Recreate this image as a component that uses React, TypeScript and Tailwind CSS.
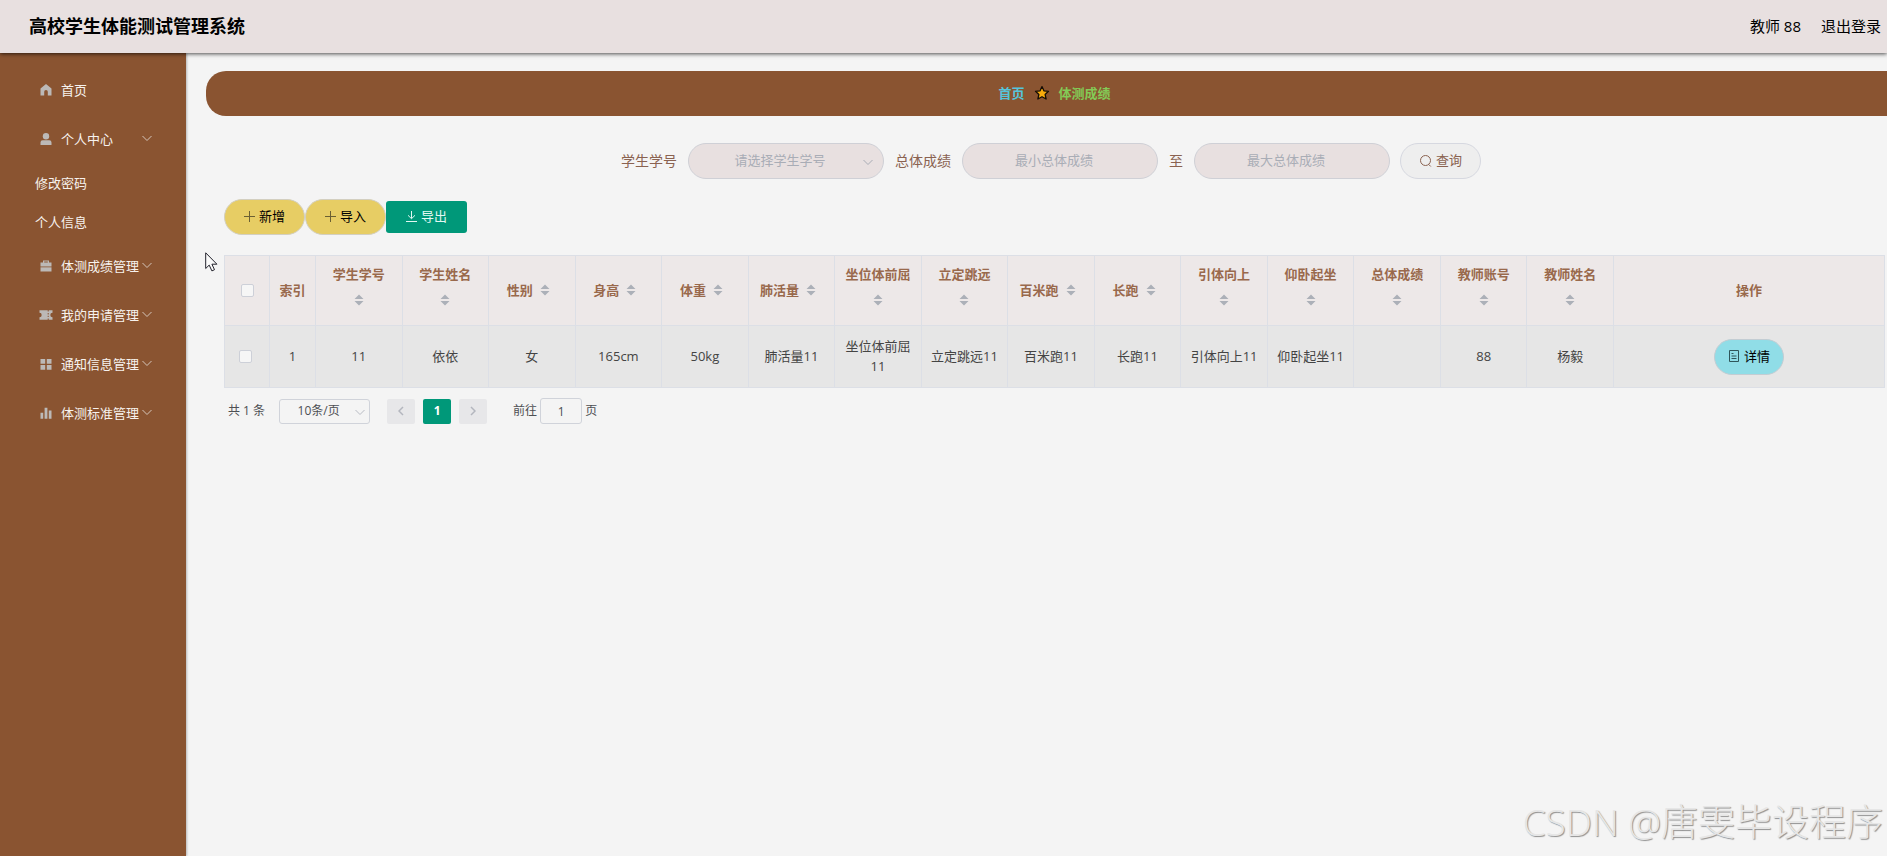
import type { ReactNode } from 'react';

type MenuEntry = {
  label: string;
  icon: ReactNode;
  expandable?: boolean;
  children?: string[];
};

function MenuIcon({ children }: { children: ReactNode }) {
  return (
    <svg viewBox="0 0 14 14" className="h-3.5 w-3.5 shrink-0 fill-[#bcb9b7]" aria-hidden="true">
      {children}
    </svg>
  );
}

function ChevronDown({ className }: { className: string }) {
  return (
    <svg viewBox="0 0 12 7" className={`h-[7px] w-3 ${className}`} fill="none" stroke="currentColor" aria-hidden="true">
      <path d="M1.500 1L6 5.500 10.500 1" />
    </svg>
  );
}

const menu: MenuEntry[] = [
  {
    label: '首页',
    icon: (
      <MenuIcon>
        <path d="M7 1L1.500 5.600V12.600h3.700V8.800a1.800 1.800 0 013.600 0v3.800h3.700V5.600z" />
      </MenuIcon>
    ),
  },
  {
    label: '个人中心',
    expandable: true,
    children: ['修改密码', '个人信息'],
    icon: (
      <MenuIcon>
        <circle cx="7" cy="4.200" r="3.200" />
        <path d="M1.500 13v-2.600a2.200 2.200 0 012.200-2.200h6.600a2.200 2.200 0 012.200 2.200V13z" />
      </MenuIcon>
    ),
  },
  {
    label: '体测成绩管理',
    expandable: true,
    icon: (
      <MenuIcon>
        <path d="M4 3.500V1.500h6v2h2.500v4h-11v-4zM5.200 3.500h3.600v-.9H5.200z" fillRule="evenodd" />
        <path d="M1.500 8.300h11v4.200h-11z" />
      </MenuIcon>
    ),
  },
  {
    label: '我的申请管理',
    expandable: true,
    icon: (
      <MenuIcon>
        <path
          d="M.5 2.200h8.200v1.300h1V2.200h3.800v2.600a2.200 2.200 0 000 4.400v2.600H9.700v-1.300h-1v1.300H.5V9.200a2.200 2.200 0 000-4.400zM8.700 5v1.400h1V5zM8.700 7.700v1.400h1V7.700z"
          fillRule="evenodd"
        />
      </MenuIcon>
    ),
  },
  {
    label: '通知信息管理',
    expandable: true,
    icon: (
      <MenuIcon>
        <path d="M1.500 2h4.700v4.700H1.500zM7.800 2h4.700v4.700H7.800zM1.500 8.100h4.700v4.700H1.500zM7.800 8.100h4.700v4.700H7.800z" />
      </MenuIcon>
    ),
  },
  {
    label: '体测标准管理',
    expandable: true,
    icon: (
      <MenuIcon>
        <path d="M1.500 6.800h2.700v6H1.500zM5.600 1.800h2.800v11H5.600zM9.800 4.600h2.700v8.200H9.800z" />
      </MenuIcon>
    ),
  },
];

const columns = [
  { title: '学生学号', value: '11' },
  { title: '学生姓名', value: '依依' },
  { title: '性别', value: '女' },
  { title: '身高', value: '165cm' },
  { title: '体重', value: '50kg' },
  { title: '肺活量', value: '肺活量11' },
  { title: '坐位体前屈', value: '坐位体前屈11' },
  { title: '立定跳远', value: '立定跳远11' },
  { title: '百米跑', value: '百米跑11' },
  { title: '长跑', value: '长跑11' },
  { title: '引体向上', value: '引体向上11' },
  { title: '仰卧起坐', value: '仰卧起坐11' },
  { title: '总体成绩', value: '' },
  { title: '教师账号', value: '88' },
  { title: '教师姓名', value: '杨毅' },
];

function Header() {
  return (
    <header className="relative z-10 flex h-[53px] items-center justify-between bg-[#e8e0e0] pr-1.5 pb-0.5 pl-[29px] text-black shadow-[0_1px_4px_#000000b0]">
      <h1 className="text-lg font-bold">高校学生体能测试管理系统</h1>
      <div className="flex items-center gap-5 text-[15px]">
        <span>教师 88</span>
        <button type="button">退出登录</button>
      </div>
    </header>
  );
}

function Sidebar() {
  return (
    <nav className="w-[186px] shrink-0 bg-[#8a5431] pt-3 text-[#f7f2ee] shadow-[1px_0_2px_#00000040]">
      <ul>
        {menu.map((item) => (
          <li key={item.label}>
            <button type="button" className="flex h-[49px] w-full items-center pr-[33px] pl-[39px]">
              {item.icon}
              <span className="ml-2 flex-1 text-left">{item.label}</span>
              {item.expandable && <ChevronDown className="text-[#d5c5ba]" />}
            </button>
            {item.children && (
              <ul>
                {item.children.map((child) => (
                  <li key={child}>
                    <a href="#" className="flex h-[39px] items-center pl-[35px]">
                      {child}
                    </a>
                  </li>
                ))}
              </ul>
            )}
          </li>
        ))}
      </ul>
    </nav>
  );
}

function Breadcrumb() {
  return (
    <div className="flex h-[45px] items-center justify-center gap-[9px] rounded-l-[20px] bg-[#8a5431] pb-0.5 pl-4 font-bold">
      <a href="#" className="text-[#55c5dc]">
        首页
      </a>
      <svg viewBox="0 0 16 16" className="h-4 w-4" aria-hidden="true">
        <path
          d="M8 1.600l1.900 4.200 4.600.5-3.400 3.100 1 4.600L8 11.700 3.900 14l1-4.600L1.500 6.300l4.600-.5z"
          fill="#f8ab0c"
          stroke="#150d05"
          strokeWidth="1.3"
          strokeLinejoin="round"
        />
      </svg>
      <span className="text-[#83ca56]">体测成绩</span>
    </div>
  );
}

const fieldClass =
  'h-9 w-[196px] rounded-full border border-[#cfd0d6] bg-[#e8e0e0] pr-7 pb-0.5 pl-4 text-center placeholder:text-[#a9adb6]';

function SearchForm() {
  const labelClass = 'px-px text-sm';
  return (
    <form className="flex items-center justify-center gap-2.5 pr-2 text-[#8a6250]">
      <label htmlFor="studentNo" className={labelClass}>
        学生学号
      </label>
      <div className="relative">
        <select id="studentNo" className={`${fieldClass} appearance-none text-[#a9adb6]`}>
          <option>请选择学生学号</option>
        </select>
        <ChevronDown className="pointer-events-none absolute top-4 right-2.5 text-[#a9adb6]" />
      </div>
      <label htmlFor="minScore" className={labelClass}>
        总体成绩
      </label>
      <input id="minScore" className={fieldClass} placeholder="最小总体成绩" />
      <label htmlFor="maxScore" className={labelClass}>
        至
      </label>
      <input id="maxScore" className={fieldClass} placeholder="最大总体成绩" />
      <button
        type="button"
        className="flex h-9 items-center gap-1 rounded-full border border-[#d6d8e0] bg-[#eeeeee] px-[18px] pb-0.5"
      >
        <svg viewBox="0 0 13 13" className="h-[13px] w-[13px]" fill="none" stroke="currentColor" aria-hidden="true">
          <circle cx="6.500" cy="6.500" r="5" />
          <path d="M9.800 10.500l2 2" />
        </svg>
        查询
      </button>
    </form>
  );
}

function PlusIcon() {
  return (
    <svg viewBox="0 0 11 11" className="h-[11px] w-[11px]" stroke="#6b6033" aria-hidden="true">
      <path d="M0 5.500h11M5.500 0v11" />
    </svg>
  );
}

function Toolbar() {
  const pill =
    'flex h-9 items-center gap-1 rounded-full border border-[#d3cfc0] bg-[#e7cd64] px-[19px] pb-0.5 text-black';
  return (
    <div className="flex items-center">
      <button type="button" className={pill}>
        <PlusIcon />
        新增
      </button>
      <button type="button" className={pill}>
        <PlusIcon />
        导入
      </button>
      <button
        type="button"
        className="flex h-8 items-center gap-1 rounded-[3px] bg-[#009879] px-5 pb-0.5 text-[#e2f7f2]"
      >
        <svg viewBox="0 0 11 11" className="h-[11px] w-[11px]" fill="none" stroke="currentColor" aria-hidden="true">
          <path d="M5.500 0v7.500M2 4.300l3.500 3.400L9 4.300M0 10.500h11" />
        </svg>
        导出
      </button>
    </div>
  );
}

function CheckBox({ label }: { label: string }) {
  return (
    <input
      type="checkbox"
      aria-label={label}
      className="block h-[13px] w-[13px] appearance-none rounded-[2px] border border-[#cdd0d8] bg-[#f6f6f6]"
    />
  );
}

function ScoreTable() {
  const cell = 'border border-[#dcdfe6]';
  return (
    <table className="w-full table-fixed border-collapse text-center">
      <thead className="bg-[#ede8e8] text-[#99694c]">
        <tr className="h-[70px]">
          <th className={`${cell} w-[45px] pl-4`}>
            <CheckBox label="全选" />
          </th>
          <th className={`${cell} w-[46px] pb-0.5`}>索引</th>
          {columns.map((col) => (
            <th key={col.title} className={`${cell} px-2 pb-0.5`}>
              <div className="flex flex-wrap items-center justify-center">
                <span className="leading-5">{col.title}</span>
                <button
                  type="button"
                  aria-label={`按${col.title}排序`}
                  className="flex h-8 w-6 items-center justify-center"
                >
                  <svg viewBox="0 0 10 12" className="h-3 w-2.5 fill-[#acb0b8]" aria-hidden="true">
                    <path d="M5 .5L9.500 5h-9zM5 11.500L.5 7h9z" />
                  </svg>
                </button>
              </div>
            </th>
          ))}
          <th className={`${cell} w-[271px] pb-0.5`}>操作</th>
        </tr>
      </thead>
      <tbody className="bg-[#e6e6e6] text-[#444444]">
        <tr className="h-[62px]">
          <td className={`${cell} pl-3.5`}>
            <CheckBox label="选择第 1 行" />
          </td>
          <td className={`${cell} pb-0.5`}>1</td>
          {columns.map((col) => (
            <td key={col.title} className={`${cell} px-2 pb-0.5`}>
              {col.value}
            </td>
          ))}
          <td className={cell}>
            <button
              type="button"
              className="mx-auto flex h-9 items-center gap-1 rounded-full border border-[#c3cdd3] bg-[#90dde7] px-[13px] pb-0.5 text-black"
            >
              <svg viewBox="0 0 12 12" className="h-3 w-3" fill="none" stroke="#2f5559" aria-hidden="true">
                <path d="M1.500.5h9v11h-9zM3.500 3.500h2M3.500 6h5M3.500 8.500h5" />
              </svg>
              详情
            </button>
          </td>
        </tr>
      </tbody>
    </table>
  );
}

function Pagination() {
  const arrowButton = 'flex h-[25px] w-7 items-center justify-center rounded-[2px] bg-[#e7e7e9]';
  return (
    <div className="flex items-center pl-1 text-xs text-[#4d4f53]">
      <span>共 1 条</span>
      <div className="relative ml-3.5">
        <select
          aria-label="每页条数"
          className="h-[25px] w-[91px] appearance-none rounded-[3px] border border-[#d0d3da] pr-5 pl-2 text-center"
        >
          <option>10条/页</option>
        </select>
        <ChevronDown className="pointer-events-none absolute top-2.5 right-1 text-[#b9bcc4]" />
      </div>
      <button type="button" aria-label="上一页" className={`ml-[17px] ${arrowButton}`}>
        <svg viewBox="0 0 6 10" className="h-2.5 w-1.5" fill="none" stroke="#b3b6be" strokeWidth="1.5" aria-hidden="true">
          <path d="M5 1L1 5l4 4" />
        </svg>
      </button>
      <button type="button" className="ml-2 h-[25px] w-7 rounded-[2px] bg-[#009879] font-bold text-white">
        1
      </button>
      <button type="button" aria-label="下一页" className={`ml-2 ${arrowButton}`}>
        <svg viewBox="0 0 6 10" className="h-2.5 w-1.5" fill="none" stroke="#b3b6be" strokeWidth="1.5" aria-hidden="true">
          <path d="M1 1l4 4-4 4" />
        </svg>
      </button>
      <label className="ml-[26px] flex items-center gap-[3px]">
        前往
        <input defaultValue="1" className="h-[26px] w-[42px] rounded-[3px] border border-[#d0d3da] text-center" />
        页
      </label>
    </div>
  );
}

export default function App() {
  return (
    <div className="relative flex min-h-screen flex-col overflow-hidden bg-[#f4f4f4] font-['Open_Sans','Noto_Sans_CJK_SC',sans-serif] text-[13px] leading-5">
      <Header />
      <div className="flex flex-1">
        <Sidebar />
        <main className="min-w-0 flex-1 pt-[18px] pl-5">
          <Breadcrumb />
          <div className="flex flex-col pt-[27px] pr-0.5 pl-[18px]">
            <SearchForm />
            <div className="mt-5 mb-5">
              <Toolbar />
            </div>
            <ScoreTable />
            <div className="mt-2.5">
              <Pagination />
            </div>
          </div>
        </main>
      </div>

      <svg
        viewBox="0 0 14 20"
        className="pointer-events-none absolute top-[252px] left-[205px] h-5 w-3.5"
        aria-hidden="true"
      >
        <path d="M.7.8v15.700l3.500-3.400 2.700 5.800 2.600-1.200-2.600-5.500h5z" fill="#fafafa" stroke="#20202a" />
      </svg>
      <div className="pointer-events-none absolute right-1 bottom-2.5 text-[37px] leading-[48px] font-light whitespace-nowrap text-[#e6e6e6] [text-shadow:1px_1px_1px_#8f8f8f]">
        CSDN @唐雯毕设程序
      </div>
    </div>
  );
}
